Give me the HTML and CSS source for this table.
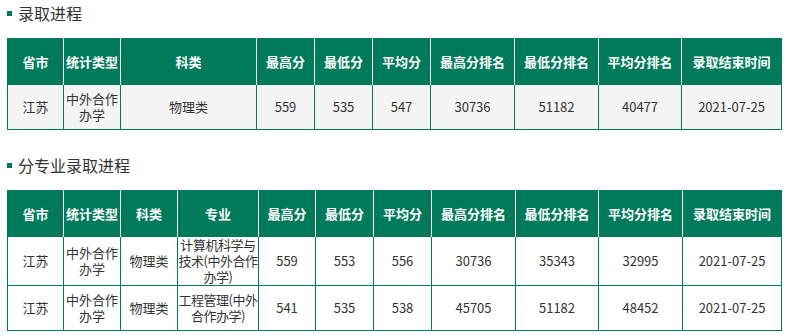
FILE: index.html
```html
<!DOCTYPE html>
<html lang="zh-CN">
<head>
<meta charset="utf-8">
<link rel="stylesheet" href="styles.css">
</head>
<body>
<div class="page">
  <h2 class="title"><span class="mark"></span>录取进程</h2>
  <table class="grid grid-a">
    <colgroup>
      <col class="w56"><col class="w57"><col class="w136"><col class="w58"><col class="w58"><col class="w58"><col class="w84"><col class="w84"><col class="w83"><col class="w100">
    </colgroup>
    <thead>
      <tr><th>省市</th><th>统计类型</th><th>科类</th><th>最高分</th><th>最低分</th><th>平均分</th><th>最高分排名</th><th>最低分排名</th><th>平均分排名</th><th>录取结束时间</th></tr>
    </thead>
    <tbody>
      <tr class="r45"><td>江苏</td><td>中外合作办学</td><td>物理类</td><td>559</td><td>535</td><td>547</td><td>30736</td><td>51182</td><td>40477</td><td>2021-07-25</td></tr>
    </tbody>
  </table>

  <h2 class="title title-2"><span class="mark"></span>分专业录取进程</h2>
  <table class="grid grid-b">
    <colgroup>
      <col class="w56"><col class="w57"><col class="w57"><col class="w81"><col class="w57"><col class="w58"><col class="w58"><col class="w84"><col class="w83"><col class="w84"><col class="w99">
    </colgroup>
    <thead>
      <tr><th>省市</th><th>统计类型</th><th>科类</th><th>专业</th><th>最高分</th><th>最低分</th><th>平均分</th><th>最高分排名</th><th>最低分排名</th><th>平均分排名</th><th>录取结束时间</th></tr>
    </thead>
    <tbody>
      <tr class="r49"><td>江苏</td><td>中外合作办学</td><td>物理类</td><td class="major">计算机科学与技术(中外合作办学)</td><td>559</td><td>553</td><td>556</td><td>30736</td><td>35343</td><td>32995</td><td>2021-07-25</td></tr>
      <tr class="r45"><td>江苏</td><td>中外合作办学</td><td>物理类</td><td class="major">工程管理(中外合作办学)</td><td>541</td><td>535</td><td>538</td><td>45705</td><td>51182</td><td>48452</td><td>2021-07-25</td></tr>
    </tbody>
  </table>
</div>
</body>
</html>
```

FILE: styles.css
```css
html, body {
  margin: 0;
  padding: 0;
  background: #fff;
}
body {
  font-family: "Noto Sans CJK SC", "Microsoft YaHei", sans-serif;
  color: #333;
  font-size: 13px;
}
.page {
  padding: 0 7px;
}
.title {
  margin: 0 0 12px 0;
  height: 26px;
  line-height: 26px;
  font-size: 16px;
  font-weight: normal;
  color: #333;
  display: flex;
  align-items: center;
}
.title-2 {
  margin-top: 22px;
}
.mark {
  width: 5px;
  height: 5px;
  background: #007a5a;
  margin-right: 6px;
}
.grid {
  width: 774px;
  table-layout: fixed;
  border-collapse: collapse;
  border: 1px solid #007a5a;
}
.grid th {
  background: #007a5a;
  color: #fff;
  font-weight: bold;
  height: 45px;
  padding: 0;
  border-left: 1px solid #fff;
  line-height: 16px;
}
.grid th:first-child { border-left: 1px solid #007a5a; }
.grid td {
  border: 1px solid #007a5a;
  text-align: center;
  padding: 0 1px;
  line-height: 16px;
}
.grid td.major {
  padding: 0;
  letter-spacing: -0.45px;
}
.grid-a td { background: #f4f4f4; }
.grid-b td { background: #fff; }
.r45 td { height: 44px; }
.r49 td { height: 48px; }
.w56 { width: 56px; }
.w57 { width: 57px; }
.w58 { width: 58px; }
.w81 { width: 81px; }
.w83 { width: 83px; }
.w84 { width: 84px; }
.w99 { width: 99px; }
.w100 { width: 100px; }
.w136 { width: 136px; }
```
